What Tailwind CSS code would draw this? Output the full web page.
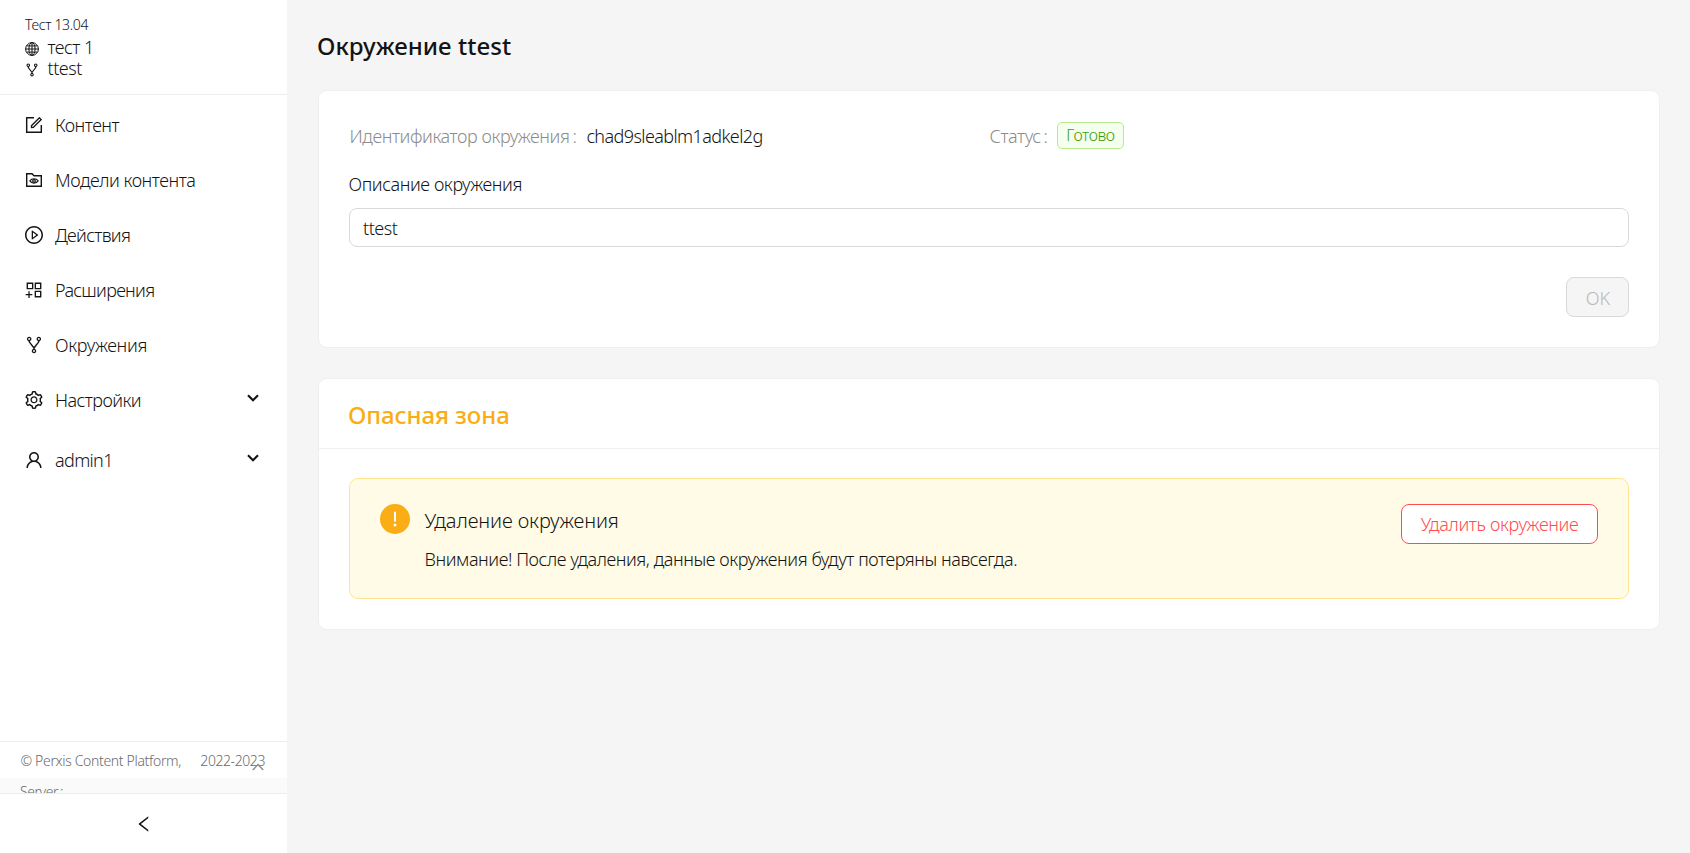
<!DOCTYPE html>
<html lang="ru">
<head>
<meta charset="utf-8">
<title>Окружение ttest</title>
<script src="https://cdn.jsdelivr.net/npm/@tailwindcss/browser@4"></script>
</head>
<body class="flex h-screen overflow-hidden bg-[#f5f5f5] font-['Noto_Sans',sans-serif] text-[18px] font-[345] text-[#141414] whitespace-nowrap">
<svg class="hidden">
  <symbol id="fork" viewBox="64 64 896 896"><path d="M752 100c-61.8 0-112 50.2-112 112 0 47.7 29.9 88.5 72 104.6v27.6L512 601.4 312 344.2v-27.6c42.1-16.1 72-56.9 72-104.6 0-61.8-50.2-112-112-112s-112 50.2-112 112c0 50.6 33.8 93.5 80 107.3v34.4c0 9.7 3.3 19.3 9.3 27L476 672.3v33.6c-44.2 15-76 56.9-76 106.1 0 61.8 50.2 112 112 112s112-50.2 112-112c0-49.2-31.8-91-76-106.1v-33.6l226.7-291.6c6-7.7 9.3-17.3 9.3-27v-34.4c46.2-13.8 80-56.7 80-107.3 0-61.8-50.2-112-112-112zM224 212a48.01 48.01 0 0196 0 48.01 48.01 0 01-96 0zm336 600a48.01 48.01 0 01-96 0 48.01 48.01 0 0196 0zm192-552a48.01 48.01 0 010-96 48.01 48.01 0 010 96z"/></symbol>
  <symbol id="chevron" viewBox="0 0 12 8"><path d="M1 1.2 6 6.2 11 1.2" fill="none" stroke="currentColor" stroke-width="2.1"/></symbol>
</svg>

<aside class="flex w-[287px] shrink-0 flex-col bg-white">
  <header class="h-[95px] border-b border-[#ededed] pt-[15px] pl-[25px]">
    <div class="h-[22px] text-[14px] leading-[20px] tracking-[-0.34px]">Тест 13.04</div>
    <div class="flex items-center gap-[8.5px] leading-[21px]">
      <svg class="mt-[2px] size-[14px]" viewBox="0 0 14 14" fill="none" stroke="currentColor" stroke-width="1"><circle cx="7" cy="7" r="6.4"/><ellipse cx="7" cy="7" rx="3.1" ry="6.4"/><path d="M7 .6v12.8M.6 7h12.8M1.6 3.9h10.8M1.6 10.1h10.8"/></svg>
      <span class="tracking-[-0.54px]">тест 1</span>
    </div>
    <div class="flex items-center gap-[8.5px] leading-[21px]">
      <svg class="mt-[2px] size-[14px]" fill="currentColor"><use href="#fork"/></svg>
      <span class="tracking-[-0.45px]">ttest</span>
    </div>
  </header>

  <nav class="flex grow flex-col pt-[3px] pl-[25px]">
    <a class="flex h-[55px] items-center gap-[12px]">
      <svg class="mb-[1px] size-[18px]" viewBox="64 64 896 896" fill="currentColor"><path d="M904 512h-56c-4.4 0-8 3.6-8 8v320H184V184h320c4.4 0 8-3.6 8-8v-56c0-4.4-3.6-8-8-8H144c-17.7 0-32 14.3-32 32v736c0 17.7 14.3 32 32 32h736c17.7 0 32-14.3 32-32V520c0-4.4-3.6-8-8-8z"/><path d="M355.9 534.9L354 653.8c-.1 8.9 7.1 16.2 16 16.2h.4l118-2.9c2-.1 4-.9 5.4-2.3l415.9-415c3.1-3.1 3.1-8.2 0-11.3L785.4 114.3c-1.6-1.6-3.6-2.3-5.7-2.3s-4.1.8-5.7 2.3l-415.8 415a8.3 8.3 0 00-2.3 5.6zm63.5 23.6L779.7 199l45.2 45.1-360.5 359.7-45.7 1.1.7-46.4z"/></svg>
      <span class="tracking-[-0.5px]">Контент</span>
    </a>
    <a class="flex h-[55px] items-center gap-[12px]">
      <svg class="mb-[1px] size-[18px]" viewBox="0 0 18 18" fill="none" stroke="currentColor" stroke-width="1.4"><path d="M1.7 2.7H7l2 2h7.3v10.6H1.7z"/><path stroke-width="1.2" d="M4.9 9.9C6.7 7 11.3 7 13.1 9.9 11.3 12.8 6.7 12.8 4.9 9.9z"/><circle cx="9" cy="9.9" r="1.3" stroke-width="1.2"/></svg>
      <span class="tracking-[-0.46px]">Модели контента</span>
    </a>
    <a class="flex h-[55px] items-center gap-[12px]">
      <svg class="mb-[1px] size-[18px]" viewBox="64 64 896 896" fill="currentColor"><path d="M512 64C264.6 64 64 264.6 64 512s200.6 448 448 448 448-200.6 448-448S759.4 64 512 64zm0 820c-205.4 0-372-166.6-372-372s166.6-372 372-372 372 166.6 372 372-166.6 372-372 372z"/><path d="M719.4 499.1l-296.1-215A15.9 15.9 0 00398 297v430c0 13.1 14.8 20.5 25.3 12.9l296.1-215a15.9 15.9 0 000-25.8zm-257.6 134V390.9L628.5 512 461.8 633.1z"/></svg>
      <span class="tracking-[-0.7px]">Действия</span>
    </a>
    <a class="flex h-[55px] items-center gap-[12px]">
      <svg class="mb-[1px] size-[18px]" viewBox="64 64 896 896" fill="currentColor"><path d="M464 144H160c-8.8 0-16 7.2-16 16v304c0 8.8 7.2 16 16 16h304c8.8 0 16-7.2 16-16V160c0-8.8-7.2-16-16-16zm-52 268H212V212h200v200zm452-268H560c-8.8 0-16 7.2-16 16v304c0 8.8 7.2 16 16 16h304c8.8 0 16-7.2 16-16V160c0-8.8-7.2-16-16-16zm-52 268H612V212h200v200zm52 132H560c-8.8 0-16 7.2-16 16v304c0 8.8 7.2 16 16 16h304c8.8 0 16-7.2 16-16V560c0-8.8-7.2-16-16-16zm-52 268H612V612h200v200zM424 712H296V584c0-4.4-3.6-8-8-8h-48c-4.4 0-8 3.6-8 8v128H104c-4.4 0-8 3.6-8 8v48c0 4.4 3.6 8 8 8h128v128c0 4.4 3.6 8 8 8h48c4.4 0 8-3.6 8-8V776h128c4.4 0 8-3.6 8-8v-48c0-4.4-3.6-8-8-8z"/></svg>
      <span class="tracking-[-0.72px]">Расширения</span>
    </a>
    <a class="flex h-[55px] items-center gap-[12px]">
      <svg class="mb-[1px] size-[18px]" fill="currentColor"><use href="#fork"/></svg>
      <span class="tracking-[-0.33px]">Окружения</span>
    </a>
    <a class="flex h-[55px] items-center gap-[12px]">
      <svg class="mb-[1px] size-[18px]" viewBox="64 64 896 896" fill="currentColor"><path d="M924.8 625.7l-65.5-56c3.1-19 4.7-38.4 4.7-57.8s-1.6-38.8-4.7-57.8l65.5-56a32.03 32.03 0 009.3-35.2l-.9-2.6a443.74 443.74 0 00-79.7-137.9l-1.8-2.1a32.12 32.12 0 00-35.1-9.5l-81.3 28.9c-30-24.6-63.5-44-99.7-57.6l-15.7-85a32.05 32.05 0 00-25.8-25.7l-2.7-.5c-52.1-9.4-106.9-9.4-159 0l-2.7.5a32.05 32.05 0 00-25.8 25.7l-15.8 85.4a351.86 351.86 0 00-99 57.4l-81.9-29.1a32 32 0 00-35.1 9.5l-1.8 2.1a446.02 446.02 0 00-79.7 137.9l-.9 2.6c-4.5 12.5-.8 26.5 9.3 35.2l66.3 56.6c-3.1 18.8-4.6 38-4.6 57.1 0 19.2 1.5 38.4 4.6 57.1L99 625.5a32.03 32.03 0 00-9.3 35.2l.9 2.6c18.1 50.4 44.9 96.9 79.7 137.9l1.8 2.1a32.12 32.12 0 0035.1 9.5l81.9-29.1c29.8 24.5 63.1 43.9 99 57.4l15.8 85.4a32.05 32.05 0 0025.8 25.7l2.7.5a449.4 449.4 0 00159 0l2.7-.5a32.05 32.05 0 0025.8-25.7l15.7-85a350 350 0 0099.7-57.6l81.3 28.9a32 32 0 0035.1-9.5l1.8-2.1c34.8-41.1 61.6-87.5 79.7-137.9l.9-2.6c4.5-12.3.8-26.3-9.3-35zM788.3 465.9c2.5 15.1 3.8 30.6 3.8 46.1s-1.3 31-3.8 46.1l-6.6 40.1 74.7 63.9a370.03 370.03 0 01-42.6 73.6L721 702.8l-31.4 25.8c-23.9 19.6-50.5 35-79.3 45.8l-38.1 14.3-17.9 97a377.5 377.5 0 01-85 0l-17.9-97.2-37.8-14.5c-28.5-10.8-55-26.2-78.7-45.7l-31.4-25.9-93.4 33.2c-17-22.9-31.2-47.6-42.6-73.6l75.5-64.5-6.5-40c-2.4-14.9-3.7-30.3-3.7-45.5 0-15.3 1.2-30.6 3.7-45.5l6.5-40-75.5-64.5c11.3-26.1 25.6-50.7 42.6-73.6l93.4 33.2 31.4-25.9c23.7-19.5 50.2-34.9 78.7-45.7l37.9-14.3 17.9-97.2c28.1-3.2 56.8-3.2 85 0l17.9 97 38.1 14.3c28.7 10.8 55.4 26.2 79.3 45.8l31.4 25.8 92.8-32.9c17 22.9 31.2 47.6 42.6 73.6L781.8 426l6.5 39.9zM512 326c-97.2 0-176 78.8-176 176s78.8 176 176 176 176-78.8 176-176-78.8-176-176-176zm79.2 255.2A111.6 111.6 0 01512 614c-29.9 0-58-11.7-79.2-32.8A111.6 111.6 0 01400 502c0-29.9 11.7-58 32.8-79.2C454 401.6 482.1 390 512 390c29.9 0 58 11.6 79.2 32.8A111.6 111.6 0 01624 502c0 29.9-11.7 58-32.8 79.2z"/></svg>
      <span class="tracking-[-0.55px]">Настройки</span>
      <svg class="mr-[28px] mb-[5px] ml-auto h-[8px] w-[12px]"><use href="#chevron"/></svg>
    </a>
    <a class="mt-[5px] flex h-[55px] items-center gap-[12px]">
      <svg class="mb-[1px] size-[18px]" viewBox="64 64 896 896" fill="currentColor"><path d="M858.5 763.6a374 374 0 00-80.6-119.5 375.63 375.63 0 00-119.5-80.6c-.4-.2-.8-.3-1.2-.5C719.5 518 760 444.7 760 362c0-137-111-248-248-248S264 225 264 362c0 82.7 40.5 156 102.8 201.1-.4.2-.8.3-1.2.5-44.8 18.9-85 46-119.5 80.6a375.63 375.63 0 00-80.6 119.5A371.7 371.7 0 00136 901.8a8 8 0 008 8.2h60c4.4 0 7.9-3.5 8-7.8 2-77.2 33-149.5 87.8-204.3 56.7-56.7 132-87.9 212.2-87.9s155.5 31.2 212.2 87.9C779 752.7 810 825 812 902.2c.1 4.4 3.6 7.8 8 7.8h60a8 8 0 008-8.2c-1-47.8-10.9-94.3-29.5-138.2zM512 534c-45.9 0-89.1-17.9-121.6-50.4S340 407.9 340 362c0-45.9 17.9-89.1 50.4-121.6S466.1 190 512 190s89.1 17.9 121.6 50.4S684 316.1 684 362c0 45.9-17.9 89.1-50.4 121.6S557.9 534 512 534z"/></svg>
      <span class="tracking-[-0.65px]">admin1</span>
      <svg class="mr-[28px] mb-[5px] ml-auto h-[8px] w-[12px]"><use href="#chevron"/></svg>
    </a>
  </nav>

  <footer class="h-[52px] shrink-0 overflow-hidden border-t border-[#ededed] text-[14px] text-[#6b6b6b]">
    <div class="relative flex h-[36px] items-center justify-between pr-[22px] pl-[20.5px]">
      <span class="tracking-[-0.34px]">© Perxis Content Platform,</span>
      <span class="tracking-[-0.42px]">2022-2023</span>
      <svg class="absolute top-[21px] right-[23px] h-[8px] w-[12px] text-[#8c8c8c]" viewBox="0 0 12 8" fill="none" stroke="currentColor" stroke-width="1.4"><path d="M.8 7 6 1.6 11.2 7"/></svg>
    </div>
    <div class="bg-[#fafafa] pl-[20px] leading-[28px] tracking-[-0.45px]">Server<span class="ml-[2px]">:</span></div>
  </footer>
  <button class="flex h-[60px] shrink-0 items-center justify-center border-t border-[#ededed]">
    <svg class="size-[18px]" viewBox="64 64 896 896" fill="currentColor"><path d="M724 218.3V141c0-6.7-7.7-10.4-12.9-6.3L260.3 486.8a31.86 31.86 0 000 50.3l450.8 352.1c5.3 4.1 12.9.4 12.9-6.3v-77.3c0-4.9-2.3-9.6-6.1-12.6l-360-281 360-281.1c3.8-3 6.1-7.7 6.1-12.6z"/></svg>
  </button>
</aside>

<main class="flex grow flex-col pr-[30px] pl-[31px]">
  <h1 class="-ml-[1px] h-[90px] text-[24px] leading-[92px] font-medium tracking-[0.05px]">Окружение ttest</h1>

  <section class="rounded-[9px] border border-[#efefef] bg-white p-[30px]">
    <div class="grid h-[30px] grid-cols-2 leading-[30px]">
      <div class="pl-[0.5px] text-[#8c8c8c]"><span class="tracking-[-0.42px]">Идентификатор окружения</span><span class="mr-[9.5px] ml-[3px]">:</span><span class="tracking-[-0.59px] text-[#141414]">chad9sleablm1adkel2g</span></div>
      <div class="flex pl-[0.5px] text-[#8c8c8c]"><span class="tracking-[-0.45px]">Статус</span><span class="mr-[9px] ml-[3px]">:</span><span class="mt-[1px] h-[27px] w-[67px] rounded-[5px] border border-[#b7eb8f] bg-[#f6ffed] text-center text-[16px] leading-[25px] tracking-[-0.4px] text-[#389e0d]">Готово</span></div>
    </div>
    <label class="-ml-[0.5px] mt-[18px] block leading-[30px] tracking-[-0.41px]">Описание окружения</label>
    <div class="mt-[9px] flex h-[39px] items-center rounded-[8px] border border-[#d9d9d9] px-[13px] pt-[2px] tracking-[-0.45px]">ttest</div>
    <div class="mt-[30px] flex justify-end">
      <button class="h-[40px] w-[63px] rounded-[8px] border border-[#d9d9d9] bg-[#f5f5f5] pt-[2px] pl-[1px] text-[#b8b8b8]">OK</button>
    </div>
  </section>

  <section class="mt-[30px] rounded-[9px] border border-[#efefef] bg-white">
    <h2 class="h-[70px] border-b border-[#efefef] pl-[29px] text-[24px] leading-[71px] font-medium tracking-[-0.1px] text-[#faad14]">Опасная зона</h2>
    <div class="px-[30px] pt-[29px] pb-[30px]">
      <div class="flex h-[121px] items-start rounded-[9px] border border-[#ffe58f] bg-[#fffbe6] px-[30px] pt-[25px]">
        <svg class="size-[30px]" viewBox="0 0 30 30"><circle cx="15" cy="15" r="15" fill="#faad14"/><path d="M14 7.7h2v9.8h-2z" fill="#fff"/><circle cx="15" cy="21" r="1.5" fill="#fff"/></svg>
        <div class="ml-[14.5px] pt-[2px]">
          <div class="text-[20px] leading-[30px] tracking-[-0.1px]">Удаление окружения</div>
          <div class="mt-[9px] leading-[28px] tracking-[-0.435px]">Внимание! После удаления, данные окружения будут потеряны навсегда.</div>
        </div>
        <button class="ml-auto h-[40px] w-[197px] rounded-[8px] border border-[#ff4d4f] bg-white pt-[1px] tracking-[-0.35px] text-[#ff4d4f]">Удалить окружение</button>
      </div>
    </div>
  </section>
</main>
</body>
</html>
